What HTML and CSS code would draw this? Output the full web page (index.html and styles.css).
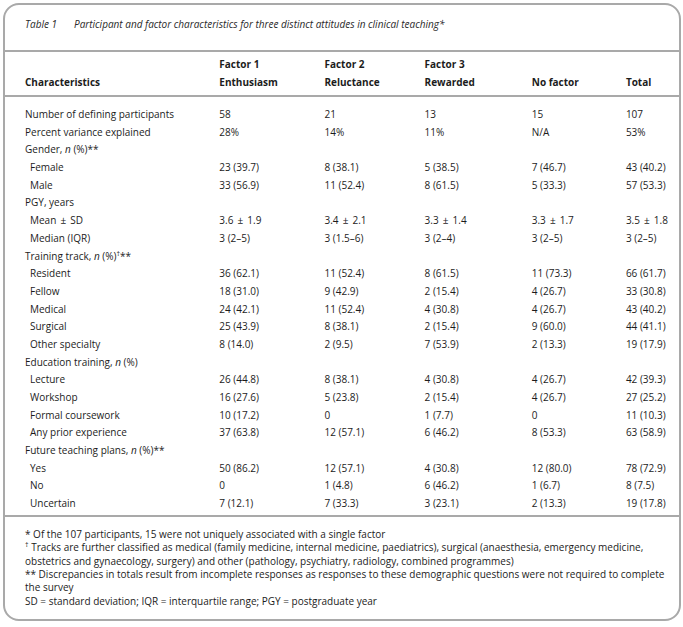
FILE: index.html
```html
<!DOCTYPE html>
<html>
<head>
<meta charset="utf-8">
<link rel="stylesheet" href="styles.css">
</head>
<body>
<div class="frame">
  <div class="caption"><span class="tno">Table 1</span><span>Participant and factor characteristics for three distinct attitudes in clinical teaching*</span></div>
  <table class="data">
    <colgroup>
      <col class="c1"><col class="c2"><col class="c3"><col class="c4"><col class="c5"><col class="c6">
    </colgroup>
    <thead>
      <tr>
        <th class="lbl">Characteristics</th>
        <th>Factor 1<br>Enthusiasm</th>
        <th>Factor 2<br>Reluctance</th>
        <th>Factor 3<br>Rewarded</th>
        <th>No factor</th>
        <th>Total</th>
      </tr>
    </thead>
    <tbody>
      <tr class="first"><td class="lbl">Number of defining participants</td><td>58</td><td>21</td><td>13</td><td>15</td><td>107</td></tr>
      <tr><td class="lbl">Percent variance explained</td><td>28%</td><td>14%</td><td>11%</td><td>N/A</td><td>53%</td></tr>
      <tr><td class="lbl">Gender, <i>n</i> (%)**</td><td></td><td></td><td></td><td></td><td></td></tr>
      <tr><td class="lbl sub">Female</td><td>23 (39.7)</td><td>8 (38.1)</td><td>5 (38.5)</td><td>7 (46.7)</td><td>43 (40.2)</td></tr>
      <tr><td class="lbl sub">Male</td><td>33 (56.9)</td><td>11 (52.4)</td><td>8 (61.5)</td><td>5 (33.3)</td><td>57 (53.3)</td></tr>
      <tr><td class="lbl">PGY, years</td><td></td><td></td><td></td><td></td><td></td></tr>
      <tr><td class="lbl sub">Mean <span class="pm">±</span> SD</td><td>3.6 <span class="pm">±</span> 1.9</td><td>3.4 <span class="pm">±</span> 2.1</td><td>3.3 <span class="pm">±</span> 1.4</td><td>3.3 <span class="pm">±</span> 1.7</td><td>3.5 <span class="pm">±</span> 1.8</td></tr>
      <tr><td class="lbl sub">Median (IQR)</td><td>3 (2–5)</td><td>3 (1.5–6)</td><td>3 (2–4)</td><td>3 (2–5)</td><td>3 (2–5)</td></tr>
      <tr><td class="lbl">Training track, <i>n</i> (%)<sup>†</sup>**</td><td></td><td></td><td></td><td></td><td></td></tr>
      <tr><td class="lbl sub">Resident</td><td>36 (62.1)</td><td>11 (52.4)</td><td>8 (61.5)</td><td>11 (73.3)</td><td>66 (61.7)</td></tr>
      <tr><td class="lbl sub">Fellow</td><td>18 (31.0)</td><td>9 (42.9)</td><td>2 (15.4)</td><td>4 (26.7)</td><td>33 (30.8)</td></tr>
      <tr><td class="lbl sub">Medical</td><td>24 (42.1)</td><td>11 (52.4)</td><td>4 (30.8)</td><td>4 (26.7)</td><td>43 (40.2)</td></tr>
      <tr><td class="lbl sub">Surgical</td><td>25 (43.9)</td><td>8 (38.1)</td><td>2 (15.4)</td><td>9 (60.0)</td><td>44 (41.1)</td></tr>
      <tr><td class="lbl sub">Other specialty</td><td>8 (14.0)</td><td>2 (9.5)</td><td>7 (53.9)</td><td>2 (13.3)</td><td>19 (17.9)</td></tr>
      <tr><td class="lbl">Education training, <i>n</i> (%)</td><td></td><td></td><td></td><td></td><td></td></tr>
      <tr><td class="lbl sub">Lecture</td><td>26 (44.8)</td><td>8 (38.1)</td><td>4 (30.8)</td><td>4 (26.7)</td><td>42 (39.3)</td></tr>
      <tr><td class="lbl sub">Workshop</td><td>16 (27.6)</td><td>5 (23.8)</td><td>2 (15.4)</td><td>4 (26.7)</td><td>27 (25.2)</td></tr>
      <tr><td class="lbl sub">Formal coursework</td><td>10 (17.2)</td><td>0</td><td>1 (7.7)</td><td>0</td><td>11 (10.3)</td></tr>
      <tr><td class="lbl sub">Any prior experience</td><td>37 (63.8)</td><td>12 (57.1)</td><td>6 (46.2)</td><td>8 (53.3)</td><td>63 (58.9)</td></tr>
      <tr><td class="lbl">Future teaching plans, <i>n</i> (%)**</td><td></td><td></td><td></td><td></td><td></td></tr>
      <tr><td class="lbl sub">Yes</td><td>50 (86.2)</td><td>12 (57.1)</td><td>4 (30.8)</td><td>12 (80.0)</td><td>78 (72.9)</td></tr>
      <tr><td class="lbl sub">No</td><td>0</td><td>1 (4.8)</td><td>6 (46.2)</td><td>1 (6.7)</td><td>8 (7.5)</td></tr>
      <tr class="last"><td class="lbl sub">Uncertain</td><td>7 (12.1)</td><td>7 (33.3)</td><td>3 (23.1)</td><td>2 (13.3)</td><td>19 (17.8)</td></tr>
    </tbody>
  </table>
  <div class="notes">
    <p>* Of the 107 participants, 15 were not uniquely associated with a single factor</p>
    <p><sup>†</sup> Tracks are further classified as medical (family medicine, internal medicine, paediatrics), surgical (anaesthesia, emergency medicine,<br>obstetrics and gynaecology, surgery) and other (pathology, psychiatry, radiology, combined programmes)</p>
    <p>** Discrepancies in totals result from incomplete responses as responses to these demographic questions were not required to complete<br>the survey</p>
    <p>SD = standard deviation; IQR = interquartile range; PGY = postgraduate year</p>
  </div>
</div>
</body>
</html>
```

FILE: styles.css
```css
html, body {
  margin: 0;
  padding: 0;
  background: #ffffff;
}

body {
  font-family: "Open Sans", "Noto Sans", sans-serif;
  color: #1c1c1c;
}

.frame {
  box-sizing: border-box;
  margin: 3px 0 0 3px;
  width: 678px;
  height: 618px;
  border: 2px solid #a9a9a9;
  border-radius: 16px;
  overflow: hidden;
}

.caption {
  box-sizing: border-box;
  height: 47px;
  padding: 12px 0 0 20px;
  font-size: 10px;
  line-height: 14px;
  font-style: italic;
  color: #2a2a2a;
  border-bottom: 2px solid #a9a9a9;
  white-space: nowrap;
}

.caption .tno {
  display: inline-block;
  width: 49px;
}

.data {
  width: 100%;
  table-layout: fixed;
  border-collapse: collapse;
  font-size: 10px;
}

.c1 { width: 214px; }
.c2 { width: 105px; }
.c3 { width: 100px; }
.c4 { width: 107px; }
.c5 { width: 94px; }
.c6 { width: 53px; }

.data th,
.data td {
  padding: 0;
  text-align: left;
  white-space: nowrap;
}

.data thead tr {
  border-bottom: 2px solid #a9a9a9;
}

.data th {
  font-weight: 700;
  line-height: 18px;
  vertical-align: bottom;
  padding: 3px 0 4px 0;
}

.data .lbl {
  padding-left: 20px;
}

.data .lbl.sub {
  padding-left: 25px;
}

.data tbody td {
  line-height: 17.68px;
  height: 17.68px;
}

.data tbody tr.first td {
  padding-top: 9px;
}

.data tbody tr.last td {
  padding-bottom: 2px;
}

.data tbody tr.last {
  border-bottom: 2px solid #a9a9a9;
}

.pm {
  margin: 0 1.5px;
}

.data sup,
.notes sup {
  font-size: 7px;
  line-height: 0;
  vertical-align: 4px;
}

.notes {
  padding: 11px 0 0 20px;
  font-size: 10px;
  line-height: 13.4px;
  white-space: nowrap;
}

.notes p {
  margin: 0;
}
```
